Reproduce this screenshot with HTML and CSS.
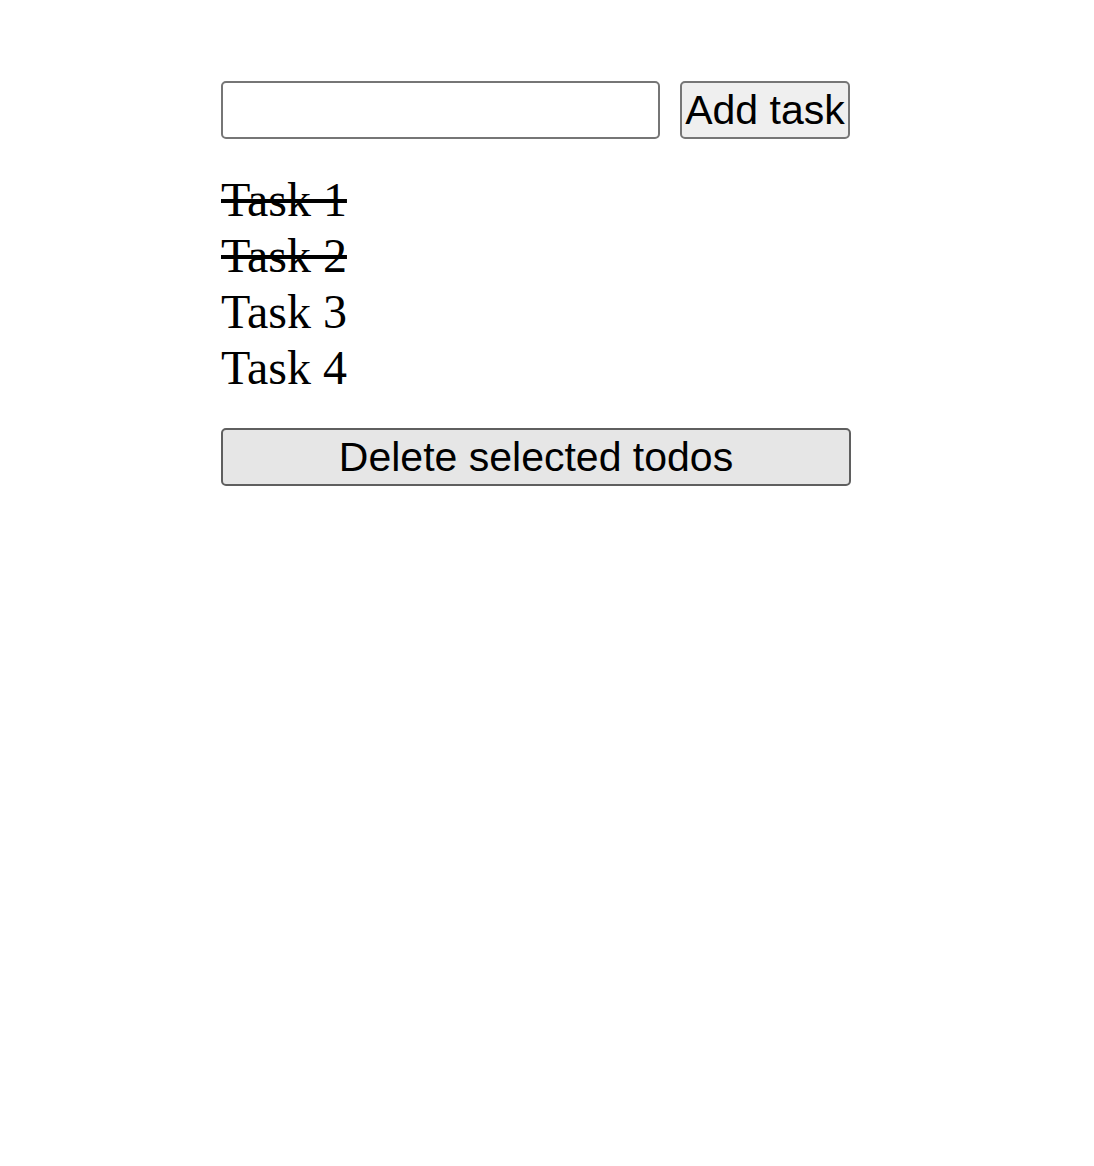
FILE: index.html
```html
<!DOCTYPE html>
<html>
<head>
<meta charset="utf-8">
<link rel="stylesheet" href="styles.css">
</head>
<body>
<div class="app">
  <div class="add-row">
    <input class="task-input" type="text">
    <button class="add-btn">Add task</button>
  </div>
  <ul class="tasks">
    <li class="task done">Task 1</li>
    <li class="task done">Task 2</li>
    <li class="task">Task 3</li>
    <li class="task">Task 4</li>
  </ul>
  <button class="delete-btn">Delete selected todos</button>
</div>
</body>
</html>
```

FILE: styles.css
```css
html, body {
  margin: 0;
  padding: 0;
  background: #fff;
}
.app {
  padding: 81px 0 0 221px;
  width: 630px;
  display: flex;
  flex-direction: column;
  align-items: flex-start;
}
.add-row {
  display: flex;
  gap: 20px;
}
.task-input {
  box-sizing: border-box;
  width: 439px;
  height: 58px;
  margin: 0;
  border: 2px solid #767676;
  border-radius: 5px;
  background: #fff;
  font: 41px "Liberation Sans", Arial, sans-serif;
}
.add-btn, .delete-btn {
  box-sizing: border-box;
  height: 58px;
  margin: 0;
  padding: 0 2px;
  border: 2px solid #767676;
  border-radius: 5px;
  background: #efefef;
  color: #000;
  font: 41px "Liberation Sans", Arial, sans-serif;
  line-height: 1;
}
.add-btn {
  width: 170px;
}
.tasks {
  list-style: none;
  margin: 33px 0 0;
  padding: 0;
  font: 48px "Liberation Serif", "Times New Roman", serif;
  line-height: 56px;
}
.task.done {
  text-decoration: line-through;
}
.delete-btn {
  width: 630px;
  margin-top: 32px;
  background: #e6e6e6;
  border-color: #5f5f5f;
}
```
